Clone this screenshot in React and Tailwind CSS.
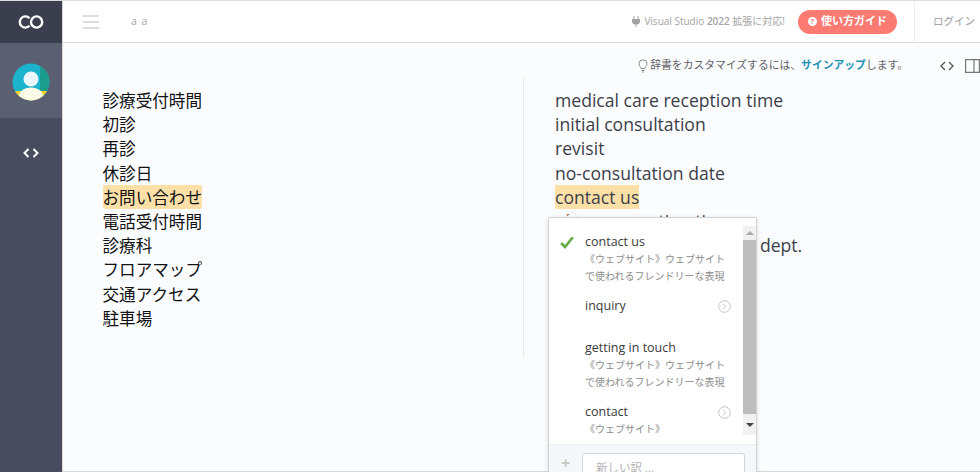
import React from 'react'

const sourceLines = ['診療受付時間', '初診', '再診', '休診日', 'お問い合わせ', '電話受付時間', '診療科', 'フロアマップ', '交通アクセス', '駐車場']
const targetLines = ['medical care reception time', 'initial consultation', 'revisit', 'no-consultation date', 'contact us', 'phone reception time', 'outpatients consultation dept.']

const jp = 'font-["Open_Sans","Noto_Sans_CJK_JP",sans-serif]'

const NextIcon = () => (
    <svg width="13" height="13" viewBox="0 0 13 13" fill="none" stroke="#c4c4c4" className="mt-[3px] shrink-0">
        <circle cx="6.5" cy="6.5" r="5.8" strokeWidth="1" />
        <path d="M5 3.8 7.7 6.5 5 9.2" strokeWidth="1" />
    </svg>
)

const Option = ({ title, note, check, next, className }) => (
    <div className={`flex pl-[11px] pr-[12px] ${className}`}>
        <div className="w-[25px] shrink-0">
            {check && (
                <svg width="14" height="13" viewBox="0 0 14 13" fill="none" className="mt-[3px]">
                    <path d="M1.2 7 5 11 12.8 1.2" stroke="#62ad45" strokeWidth="2.6" />
                </svg>
            )}
        </div>
        <div className="flex-1 min-w-0">
            <div className="flex justify-between">
                <span className="text-[12.5px] leading-[18px] text-[#3a3a3a]">{title}</span>
                {next && <NextIcon />}
            </div>
            {note && <p className="text-[10px] leading-[16.5px] text-[#8b8b8b] whitespace-pre">{note}</p>}
        </div>
    </div>
)

const Popover = () => (
    <div className={`absolute left-[548px] top-[216px] w-[209px] h-[255px] ${jp}`}>
        <div className="absolute left-[20px] -top-[4px] w-[9px] h-[9px] rotate-45 bg-white border-l border-t border-[#ececec]"></div>
        <div className="relative w-full h-full bg-white border border-[#d4d4d4] border-b-0 rounded-t-[2px] shadow-[0_1px_4px_rgba(0,0,0,0.15)] overflow-hidden flex flex-col">
            <div className="flex h-[226px] shrink-0">
                <div className="flex-1 min-w-0 pt-[15px]">
                    <Option check title="contact us" note={'《ウェブサイト》ウェブサイト\nで使われるフレンドリーな表現'} />
                    <Option next title="inquiry" className="mt-[13px] h-[42px]" />
                    <Option title="getting in touch" note={'《ウェブサイト》ウェブサイト\nで使われるフレンドリーな表現'} />
                    <Option next title="contact" note="《ウェブサイト》" className="mt-[13px]" />
                </div>
                <div className="w-[13px] mt-[8px] h-[209px] bg-[#f1f1f1] flex flex-col items-center">
                    <div className="h-[14px] flex items-center justify-center shrink-0">
                        <div className="w-0 h-0 border-x-[4px] border-x-transparent border-b-[4px] border-b-[#a8a8a8]"></div>
                    </div>
                    <div className="w-full h-[174px] bg-[#bdbdbd]"></div>
                    <div className="flex-1 flex items-center justify-center">
                        <div className="w-0 h-0 border-x-[4px] border-x-transparent border-t-[4px] border-t-[#444]"></div>
                    </div>
                </div>
            </div>
            <div className="flex-1 bg-[#f4f8fb] border-t border-[#e8edf1] flex pl-[12px] pr-[11px] pt-[8px]">
                <span className="w-[21px] shrink-0 text-[#c8c8c8] text-[16px] font-bold leading-[20px]">+</span>
                <div className="flex-1 h-[40px] bg-white border border-[#d6d6d6] rounded-[3px] px-[13px] pt-[5px] text-[11.5px] text-[#b4b4b4]">新しい訳 ...</div>
            </div>
        </div>
    </div>
)

export default function App() {
    return (
        <div className={`relative flex w-[980px] h-[472px] overflow-hidden bg-[#fbfcfe] border-t border-[#dcdcdc] ${jp}`}>
            <aside className="w-[63px] shrink-0 bg-[#474c5f] flex flex-col border-r border-[#d8d8d8]">
                <div className="h-[42px] bg-[#3a3e4d] flex items-center justify-center">
                    <svg width="26" height="14" viewBox="0 0 26 14" fill="none" stroke="#fff" strokeWidth="2.4">
                        <path d="M11.5 3.2A5.6 5.6 0 1 0 11.5 10.8" />
                        <circle cx="18.6" cy="7" r="5.6" />
                    </svg>
                </div>
                <div className="h-[75px] bg-[#5b5f72] flex items-center justify-center pt-[2px]">
                    <svg width="38" height="38" viewBox="0 0 38 38">
                        <clipPath id="avatar"><circle cx="19" cy="19" r="18.5" /></clipPath>
                        <g clipPath="url(#avatar)">
                            <rect width="38" height="38" fill="#1cb4cc" />
                            <rect x="28" width="10" height="38" fill="#1c9c8c" />
                            <rect y="28" width="38" height="10" fill="#f0d32c" />
                            <circle cx="19" cy="16" r="7.5" fill="#eaf8fb" />
                            <path d="M6 38C6 28 12 24.500 19 24.500S32 28 32 38Z" fill="#fdfbe8" />
                        </g>
                    </svg>
                </div>
                <div className="flex justify-center pt-[30px]">
                    <svg width="16" height="10" viewBox="0 0 16 10" fill="none" stroke="#fff" strokeWidth="2">
                        <path d="M5.500 1 1.500 5 5.500 9M10.500 1 14.500 5 10.500 9" />
                    </svg>
                </div>
            </aside>
            <div className="flex-1 min-w-0 flex flex-col border-b border-[#d8d8d8]">
                <header className="h-[42px] shrink-0 bg-white border-b border-[#dcdcdc] flex items-center pl-[20px]">
                    <div className="w-[16px] flex flex-col gap-[4px]">
                        <div className="h-[2px] bg-[#dcdcdc]"></div>
                        <div className="h-[2px] bg-[#dcdcdc]"></div>
                        <div className="h-[2px] bg-[#dcdcdc]"></div>
                    </div>
                    <span className="ml-[32px] text-[10.5px] tracking-[1px] text-[#a8a8a8]">a a</span>
                    <div className="ml-auto flex items-center h-full">
                        <svg width="8" height="11" viewBox="0 0 8 11" fill="#a3a3a3" className="mr-[4px]">
                            <path d="M1.500 0h1v3h3V0h1v3H8v2.500A3 3 0 0 1 4.500 8.400V11h-1V8.400A3 3 0 0 1 0 5.500V3h1.500Z" />
                        </svg>
                        <span className="text-[10px] text-[#a3a3a3] whitespace-nowrap">Visual Studio <span className="font-semibold">2022</span> 拡張に対応!</span>
                        <div className="ml-[13px] h-[24px] w-[99px] rounded-full bg-[#fb7a72] flex items-center justify-center text-white text-[11px] font-bold">
                            <span className="w-[9px] h-[9px] rounded-full bg-white text-[#fb7a72] text-[7px] leading-[9px] text-center mr-[4px]">?</span>
                            使い方ガイド
                        </div>
                        <div className="ml-[17px] h-[40px] w-[66px] border-l border-[#ececec] pl-[18px] flex items-center text-[10.5px] text-[#9c9c9c] whitespace-nowrap overflow-hidden">ログイン</div>
                    </div>
                </header>
                <div className="h-[34px] shrink-0 pt-[11px] flex items-center justify-end text-[10.8px] text-[#5f6368]">
                    <svg width="10" height="14" viewBox="0 0 10 14" fill="none" stroke="#8c8c8c" strokeWidth="1" className="mr-[2px]">
                        <path d="M3 9.500C3 8 1 7 1 4.800a4 4 0 0 1 8 0C9 7 7 8 7 9.500ZM3.500 11.500h3M4.200 13h1.600" />
                    </svg>
                    <span>辞書をカスタマイズするには、<span className="text-[#1f93b5] font-semibold">サインアップ</span>します。</span>
                    <svg width="14" height="10" viewBox="0 0 14 10" fill="none" stroke="#555" strokeWidth="1.300" className="ml-[32px]">
                        <path d="M5 1 1 5 5 9M9 1 13 5 9 9" />
                    </svg>
                    <svg width="15" height="14" viewBox="0 0 15 14" fill="none" stroke="#777" strokeWidth="1.200" className="ml-[11px]">
                        <path d="M.6.6h13.800v12.800H.6ZM9 .6v12.800" />
                    </svg>
                </div>
                <main className="flex-1 flex items-start">
                    <div className="w-[461px] shrink-0 h-[280px] border-r border-[#e6e8ec] pl-[39.500px] pt-[11px] text-[16.6px] leading-[24.2px] text-[#111] font-['Noto_Sans_CJK_JP',sans-serif]">
                        {sourceLines.map((line) => (
                            <div key={line}><span className={line === 'お問い合わせ' ? 'bg-[#fde0a8] rounded-[2px]' : ''}>{line}</span></div>
                        ))}
                    </div>
                    <div className="pl-[31px] pt-[11px] text-[17.6px] leading-[24.2px] text-[#3b3f4a] font-['Open_Sans',sans-serif] whitespace-nowrap">
                        {targetLines.map((line) => (
                            <div key={line}><span className={line === 'contact us' ? 'bg-[#fde0a8]' : ''}>{line}</span></div>
                        ))}
                    </div>
                </main>
            </div>
            <Popover />
        </div>
    )
}
